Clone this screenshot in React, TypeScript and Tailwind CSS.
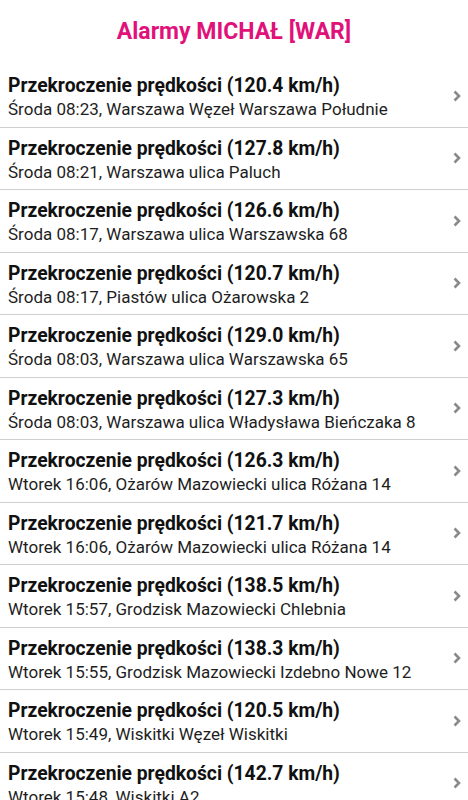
import React from "react";

const rows: [string, string][] = [
  ["120.4", "Środa 08:23, Warszawa Węzeł Warszawa Południe"],
  ["127.8", "Środa 08:21, Warszawa ulica Paluch"],
  ["126.6", "Środa 08:17, Warszawa ulica Warszawska 68"],
  ["120.7", "Środa 08:17, Piastów ulica Ożarowska 2"],
  ["129.0", "Środa 08:03, Warszawa ulica Warszawska 65"],
  ["127.3", "Środa 08:03, Warszawa ulica Władysława Bieńczaka 8"],
  ["126.3", "Wtorek 16:06, Ożarów Mazowiecki ulica Różana 14"],
  ["121.7", "Wtorek 16:06, Ożarów Mazowiecki ulica Różana 14"],
  ["138.5", "Wtorek 15:57, Grodzisk Mazowiecki Chlebnia"],
  ["138.3", "Wtorek 15:55, Grodzisk Mazowiecki Izdebno Nowe 12"],
  ["120.5", "Wtorek 15:49, Wiskitki Węzeł Wiskitki"],
  ["142.7", "Wtorek 15:48, Wiskitki A2"],
];

function Chevron() {
  return (
    <svg width="10" height="12" viewBox="0 0 10 12" className="shrink-0">
      <path d="M2.5 1.5 L7 6 L2.5 10.5" fill="none" stroke="#8a8a8a" strokeWidth="2.6" strokeLinecap="butt" strokeLinejoin="miter" />
    </svg>
  );
}

export default function App() {
  return (
    <div className="w-[468px] h-[800px] overflow-hidden bg-white" style={{ fontFamily: "Roboto, 'Noto Sans', sans-serif" }}>
      <div className="h-[65px] flex items-start justify-center pt-[17px]">
        <h1 className="text-[23px] leading-[30px] font-bold text-[#e0127a]">Alarmy MICHAŁ [WAR]</h1>
      </div>
      {rows.map(([speed, desc], i) => (
        <div key={i} className="h-[62.5px] border-b border-[#cfcfcf] flex items-center pl-[8px] pr-[6px]">
          <div className="flex-1 min-w-0 self-start pt-[9px]">
            <div className="text-[19.3px] leading-[24px] font-bold text-[#111] whitespace-nowrap">
              Przekroczenie prędkości ({speed} km/h)
            </div>
            <div className="text-[17px] leading-[22px] text-[#1e1e1e] whitespace-nowrap">{desc}</div>
          </div>
          <Chevron />
        </div>
      ))}
    </div>
  );
}
